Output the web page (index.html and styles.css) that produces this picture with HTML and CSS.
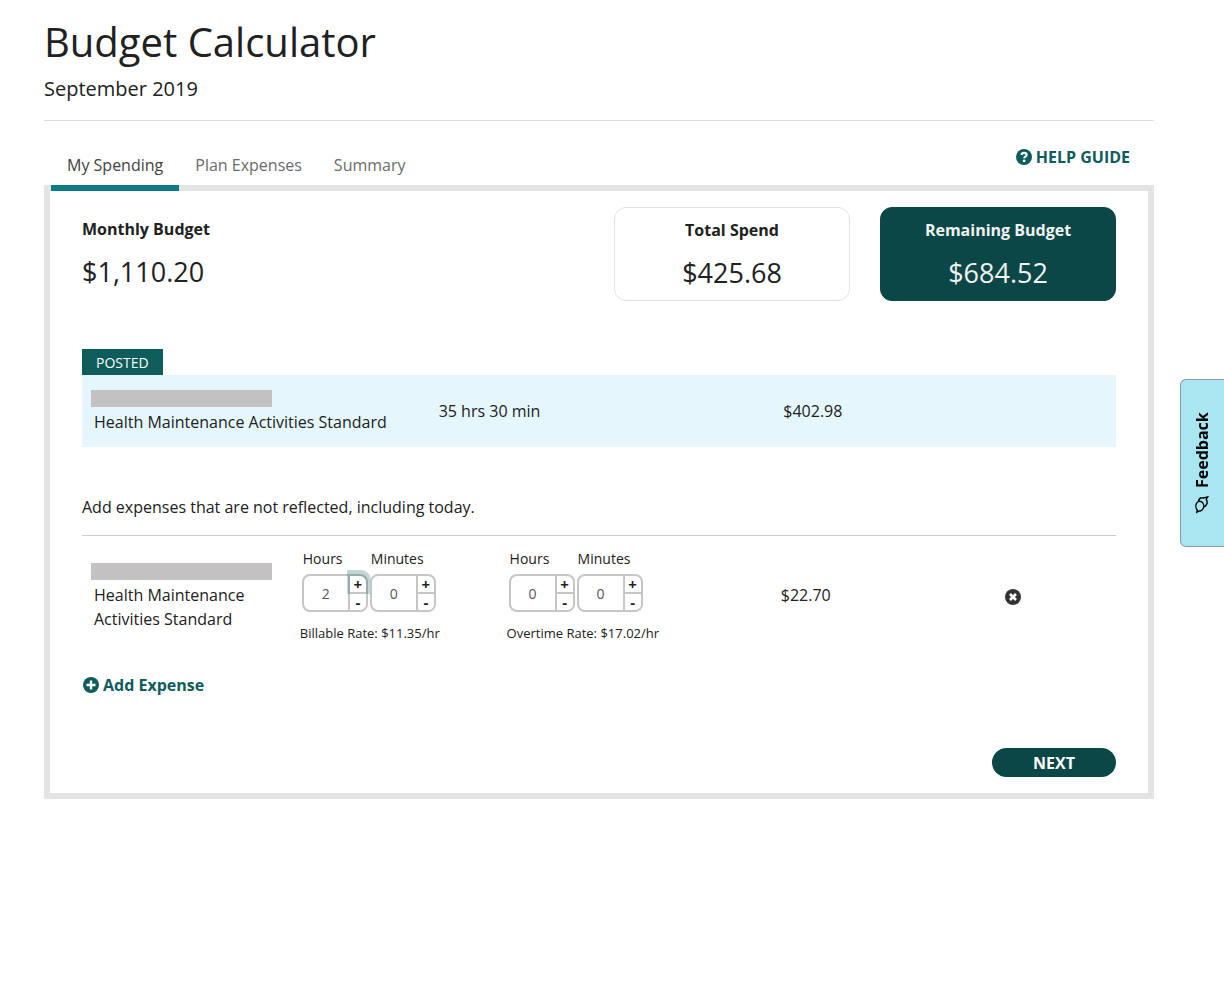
FILE: index.html
```html
<!DOCTYPE html>
<html lang="en">
<head>
    <meta charset="UTF-8">
    <meta name="viewport" content="width=device-width, initial-scale=1.0">
    <title>Budget Calculator</title>
    <link rel="stylesheet" href="styles.css">
</head>
<body>

    <main class="page">
        <header class="page-header">
            <h1>Budget Calculator</h1>
            <p class="month">September 2019</p>
        </header>

        <div class="tab-bar">
            <nav class="tabs">
                <a class="tab active" href="#spending">My Spending</a>
                <a class="tab" href="#plan">Plan Expenses</a>
                <a class="tab" href="#summary">Summary</a>
            </nav>
            <a class="help" href="#help">
                <svg class="icon" viewBox="0 0 16 16" aria-hidden="true">
                    <circle cx="8" cy="8" r="8" fill="currentColor"/>
                    <path d="M5.3 5.9C5.7 4.5 6.6 3.8 8 3.8c1.5 0 2.600.9 2.600 2.100 0 1.800-2.400 1.700-2.400 3.300" fill="none" stroke="#fff" stroke-width="2.2"/>
                    <circle cx="8.1" cy="11.900" r="1.400" fill="#fff"/>
                </svg>
                HELP GUIDE
            </a>
        </div>

        <section class="panel" id="spending">
            <div class="totals">
                <div class="monthly">
                    <h2>Monthly Budget</h2>
                    <p class="amount">$1,110.20</p>
                </div>
                <div class="card">
                    <h2>Total Spend</h2>
                    <p class="amount">$425.68</p>
                </div>
                <div class="card remaining">
                    <h2>Remaining Budget</h2>
                    <p class="amount">$684.52</p>
                </div>
            </div>

            <div class="posted">
                <span class="badge">POSTED</span>
                <table class="posted-table">
                    <tr>
                        <td><span class="name-bar"></span>Health Maintenance Activities Standard</td>
                        <td>35 hrs 30 min</td>
                        <td>$402.98</td>
                    </tr>
                </table>
            </div>

            <p class="intro">Add expenses that are not reflected, including today.</p>

            <div class="expense">
                <div class="service"><span class="name-bar"></span>Health Maintenance Activities Standard</div>
                <div class="rate">
                    <div class="fields">
                        <div class="field">
                            <label for="hours">Hours</label>
                            <div class="spinner">
                                <input id="hours" type="text" value="2">
                                <button class="plus focused" type="button" aria-label="More hours">+</button>
                                <button class="minus" type="button" aria-label="Fewer hours">-</button>
                            </div>
                        </div>
                        <div class="field">
                            <label for="minutes">Minutes</label>
                            <div class="spinner">
                                <input id="minutes" type="text" value="0">
                                <button class="plus" type="button" aria-label="More minutes">+</button>
                                <button class="minus" type="button" aria-label="Fewer minutes">-</button>
                            </div>
                        </div>
                    </div>
                    <p class="rate-note">Billable Rate: $11.35/hr</p>
                </div>
                <div class="rate">
                    <div class="fields">
                        <div class="field">
                            <label for="ot-hours">Hours</label>
                            <div class="spinner">
                                <input id="ot-hours" type="text" value="0">
                                <button class="plus" type="button" aria-label="More overtime hours">+</button>
                                <button class="minus" type="button" aria-label="Fewer overtime hours">-</button>
                            </div>
                        </div>
                        <div class="field">
                            <label for="ot-minutes">Minutes</label>
                            <div class="spinner">
                                <input id="ot-minutes" type="text" value="0">
                                <button class="plus" type="button" aria-label="More overtime minutes">+</button>
                                <button class="minus" type="button" aria-label="Fewer overtime minutes">-</button>
                            </div>
                        </div>
                    </div>
                    <p class="rate-note">Overtime Rate: $17.02/hr</p>
                </div>
                <div class="cost">$22.70</div>
                <button class="remove" type="button" aria-label="Remove expense">
                    <svg class="icon" viewBox="0 0 16 16" aria-hidden="true">
                        <circle cx="8" cy="8" r="8" fill="currentColor"/>
                        <path d="M5 5l6 6M11 5l-6 6" stroke="#fff" stroke-width="2.6"/>
                    </svg>
                </button>
            </div>

            <button class="add" type="button">
                <svg class="icon" viewBox="0 0 16 16" aria-hidden="true">
                    <circle cx="8" cy="8" r="8" fill="currentColor"/>
                    <path d="M8 3.5v9M3.5 8h9" stroke="#fff" stroke-width="2.4"/>
                </svg>
                Add Expense
            </button>

            <div class="actions">
                <button class="next" type="button">NEXT</button>
            </div>
        </section>
    </main>

    <button class="feedback" type="button">
        Feedback
        <svg class="chat" viewBox="0 0 14 18" aria-hidden="true">
            <path d="M3.400 5C4 2.600 6 1.500 8.200 2L12.600 1L11.200 3.400C13 6.200 12 9.600 8.800 11"/>
            <path d="M7.400 13.600C9.200 11.400 9 8.200 7.400 6.400C5.800 4.700 3.200 4.800 1.800 6.800C.4 9 .6 12.200 2.200 13.900L1.800 16.200L4.200 14.900C5.500 15.200 6.600 14.700 7.400 13.600z"/>
        </svg>
    </button>

</body>
</html>
```
FILE: styles.css
```css
* {
    box-sizing: border-box;
}
body {
    margin: 0;
    font-family: "Open Sans", "Noto Sans", sans-serif;
    font-size: 16px;
    line-height: 24px;
    color: #212121;
    background: #fff;
}
h1, h2, p {
    margin: 0;
}
button, input {
    font-family: inherit;
    color: inherit;
}
button {
    padding: 0;
    border: 0;
    background: none;
    cursor: pointer;
}
a {
    text-decoration: none;
}
.page {
    margin: 0 70px 0 44px;
    padding-top: 17px;
}

/* header */
.page-header {
    padding-bottom: 16px;
    border-bottom: 1px solid #dcdcdc;
}
h1 {
    font-size: 40px;
    font-weight: 400;
    line-height: 50px;
}
.month {
    padding-top: 7px;
    font-size: 20px;
    line-height: 30px;
}

/* tabs */
.tab-bar {
    display: flex;
    justify-content: space-between;
    align-items: flex-end;
    height: 70px;
    margin-bottom: -6px;
    padding: 0 24px 0 7px;
    position: relative;
}
.tabs {
    display: flex;
}
.tab {
    padding: 0 16px 8px;
    border-bottom: 6px solid transparent;
    color: #6b6b6b;
}
.tab.active {
    color: #424242;
    border-color: #0f7b8a;
}
.help {
    display: flex;
    align-items: center;
    gap: 4px;
    margin-bottom: 22px;
    font-weight: 700;
    color: #0e5c5b;
}
.icon {
    display: block;
    width: 16px;
    height: 16px;
}

/* panel */
.panel {
    padding: 16px 32px;
    border: 6px solid #e4e4e4;
}
.totals {
    display: flex;
    gap: 30px;
}
.totals h2 {
    font-size: 16px;
    line-height: 24px;
    font-weight: 700;
}
.amount {
    padding: 12px 0 2px;
    font-size: 27px;
    line-height: 38px;
}
.monthly {
    flex: 1;
    padding-top: 10px;
}
.card {
    width: 236px;
    padding: 10px 0 6px;
    border: 1px solid #e2e2e2;
    border-radius: 12px;
    text-align: center;
}
.remaining {
    background: #0a4746;
    border-color: #0a4746;
    color: #f2f2f2;
}

/* posted services */
.posted {
    margin-top: 48px;
}
.badge {
    display: block;
    width: max-content;
    padding: 2px 14px 0;
    background: #0e5c5b;
    color: #fff;
    font-size: 14px;
}
.posted-table {
    width: 100%;
    table-layout: fixed;
    border-collapse: collapse;
    background: #e5f7fc;
}
.posted-table td {
    height: 72px;
    padding: 0 12px;
}
.name-bar {
    display: block;
    width: 181px;
    height: 17px;
    margin: 2px 0 3px -3px;
    background: #c3c1c2;
}
.intro {
    padding: 48px 0 16px;
    border-bottom: 1px solid #ccc;
}

/* expense row */
.expense {
    display: grid;
    grid-template-columns: repeat(5, 1fr);
    padding-top: 11px;
}
.service {
    padding: 14px 12px 0;
}
.rate {
    padding-left: 13px;
    white-space: nowrap;
}
.fields {
    display: flex;
    gap: 2px;
}
.field label {
    display: block;
    font-size: 14px;
    line-height: 24px;
    padding: 0 0 3px 1px;
}
.spinner {
    display: grid;
    grid-template-columns: 46px 16px;
    grid-template-rows: 1fr 1fr;
    width: 66px;
    height: 38px;
    border: 2px solid #c6c6c6;
    border-radius: 8px;
}
.spinner input {
    grid-row: 1 / 3;
    width: 100%;
    min-width: 0;
    padding: 0;
    border: 0;
    border-right: 2px solid #c6c6c6;
    border-radius: 0;
    background: none;
    text-align: center;
    font-size: 14px;
    color: #555;
}
.spinner button {
    font-size: 15px;
    font-weight: 700;
    line-height: 16px;
}
.spinner .plus {
    border-top-right-radius: 6px;
}
.spinner .minus {
    border-top: 2px solid #c6c6c6;
    border-bottom-right-radius: 6px;
    background: #fff;
    position: relative;
}
.spinner .focused {
    box-shadow: 1px -2px 0 4px rgba(14, 92, 91, 0.25);
}
.rate-note {
    padding-top: 9px;
    margin-left: -2px;
    font-size: 13px;
    line-height: 24px;
}
.cost {
    padding-top: 36px;
    text-align: center;
}
.remove {
    justify-self: center;
    align-self: start;
    margin-top: 42px;
    color: #333;
}
.add {
    display: flex;
    align-items: center;
    gap: 4px;
    margin-top: 28px;
    padding-left: 1px;
    font-size: 16px;
    line-height: 24px;
    font-weight: 700;
    color: #0e5c5b;
}
.actions {
    display: flex;
    justify-content: flex-end;
    padding-top: 51px;
}
.next {
    width: 124px;
    height: 29px;
    border-radius: 15px;
    background: #0a4746;
    color: #fff;
    font-size: 16px;
    font-weight: 700;
}

/* feedback tab on the window edge */
.feedback {
    position: fixed;
    top: 379px;
    right: 0;
    display: flex;
    flex-direction: row-reverse;
    align-items: center;
    justify-content: center;
    gap: 8px;
    width: 44px;
    height: 168px;
    border: 1px solid #8a9c9f;
    border-left: 0;
    border-radius: 0 6px 6px 0;
    background: #a9e6f1;
    color: #000;
    font-size: 16px;
    font-weight: 700;
    writing-mode: vertical-rl;
    transform: rotate(180deg);
}
.chat {
    width: 14px;
    height: 18px;
    fill: none;
    stroke: #000;
    stroke-width: 1.4;
    transform: rotate(180deg);
}
```
